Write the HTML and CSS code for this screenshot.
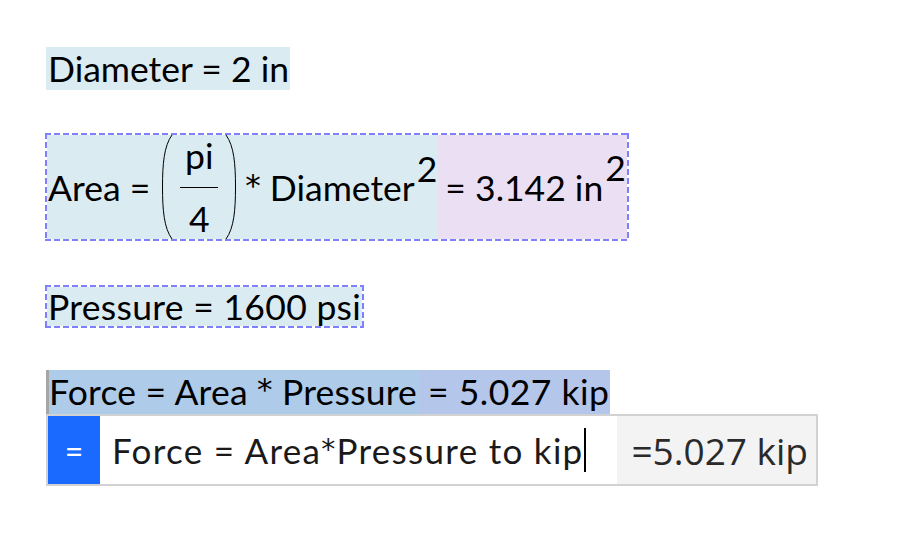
FILE: index.html
```html
<!DOCTYPE html>
<html>
<head>
<meta charset="utf-8">
<link rel="stylesheet" href="styles.css">
</head>
<body>
<div class="sheet">
  <div class="row row-diameter">
    <div class="expr">Diameter = 2 in</div>
  </div>

  <div class="row row-area">
    <div class="box dashed">
      <div class="expr expr-area">
        <span>Area =</span>
        <span class="paren-group">
          <svg class="paren" width="12" height="106" viewBox="0 0 12 106"><path d="M11 1 C3 12 1.5 30 1.5 53 C1.5 76 3 94 11 105" fill="none" stroke="#000" stroke-width="1"/></svg>
          <span class="frac">
            <span class="num">pi</span>
            <span class="bar"></span>
            <span class="den">4</span>
          </span>
          <svg class="paren" width="12" height="106" viewBox="0 0 12 106"><path d="M1 1 C9 12 10.5 30 10.5 53 C10.5 76 9 94 1 105" fill="none" stroke="#000" stroke-width="1"/></svg>
        </span>
        <span><span class="ast">*</span> Diameter<sup class="pow">2</sup></span>
      </div>
      <div class="result result-area">= 3.142 in<sup class="pow">2</sup></div>
    </div>
  </div>

  <div class="row row-pressure">
    <div class="box dashed">
      <div class="expr">Pressure = 1600 psi</div>
    </div>
  </div>

  <div class="row row-force">
    <div class="box selected">
      <div class="expr expr-force">Force = Area <span class="ast">*</span> Pressure</div>
      <div class="result result-force">= 5.027 kip</div>
    </div>
  </div>

  <div class="input-bar">
    <div class="eq-btn">=</div>
    <div class="input-text">Force = Area<span class="ast ast-input">*</span>Pressure to kip<span class="caret"></span></div>
    <div class="input-result">=5.027 kip</div>
  </div>
</div>
</body>
</html>
```

FILE: styles.css
```css
html, body {
  margin: 0;
  padding: 0;
  background: #ffffff;
}

body {
  font-family: "Lato", "Noto Sans", sans-serif;
  color: #000;
}

.sheet {
  padding: 47px 0 0 45px;
  display: flex;
  flex-direction: column;
  align-items: flex-start;
}

.row {
  display: flex;
}

.expr {
  background: #dbebf2;
  font-size: 35.5px;
  line-height: 43px;
  white-space: nowrap;
}

.ast {
  font-family: "DejaVu Sans", sans-serif;
  font-size: 31px;
  line-height: 0;
  vertical-align: 5px;
}

.row-diameter {
  margin-left: 1px;
}
.row-diameter .expr {
  padding: 0 1px 0 2px;
}

.box {
  display: flex;
  align-items: stretch;
}

.dashed {
  padding: 2px;
  background:
    repeating-linear-gradient(90deg, #8080ff 0 6px, transparent 6px 9px) left top / 100% 2px no-repeat,
    repeating-linear-gradient(90deg, #8080ff 0 6px, transparent 6px 9px) left bottom / 100% 2px no-repeat,
    repeating-linear-gradient(180deg, #8080ff 0 6px, transparent 6px 9px) left top / 2px 100% no-repeat,
    repeating-linear-gradient(180deg, #8080ff 0 6px, transparent 6px 9px) right top / 2px 100% no-repeat;
}

.row-area {
  margin-top: 43px;
}

.expr-area {
  display: flex;
  align-items: center;
  height: 104px;
  padding: 0 1px 0 1px;
}

.paren-group {
  display: inline-flex;
  align-items: center;
  margin: 0 8px 0 11px;
}

.paren {
  display: block;
}

.frac {
  display: inline-flex;
  flex-direction: column;
  align-items: center;
  margin: 0 6px;
  width: 40px;
}

.num, .den {
  line-height: 40px;
  font-size: 35.5px;
}

.bar {
  display: block;
  width: 38px;
  height: 1px;
  background: #000;
  margin: 11px 0;
}

.pow {
  font-size: 35.5px;
  vertical-align: 0;
  position: relative;
  top: -19px;
  line-height: 0;
  margin-left: 2px;
}

.result {
  font-size: 35.5px;
  white-space: nowrap;
}

.result-area {
  background: #ebe0f3;
  display: flex;
  align-items: center;
  padding: 0 1px 0 7px;
}

.row-pressure {
  margin-top: 44px;
}
.row-pressure .expr {
  line-height: 39px;
  padding: 0 1px 0 1px;
  letter-spacing: 0.3px;
}

.row-force {
  margin-top: 42px;
  margin-left: 1px;
}

.selected {
  border-left: 3px solid #a6a6a6;
}

.expr-force {
  background: #aecbea;
  line-height: 44px;
  padding: 0 3px 0 0;
  letter-spacing: 0.2px;
}

.result-force {
  background: #b4c6ea;
  line-height: 44px;
  padding: 0 0 0 8px;
  letter-spacing: 0.5px;
}

.input-bar {
  margin-left: 1px;
  width: 768px;
  height: 68px;
  border: 2px solid #d2d2d2;
  display: flex;
  align-items: stretch;
  background: #fff;
}

.eq-btn {
  width: 52px;
  background: #1a6aff;
  color: #ffffff;
  font-family: "Lato", sans-serif;
  font-size: 32px;
  display: flex;
  align-items: center;
  justify-content: center;
}

.input-text {
  flex: 1;
  display: flex;
  align-items: center;
  padding-left: 12px;
  font-size: 35px;
  letter-spacing: 1.3px;
  color: #1a1a1a;
  white-space: nowrap;
}

.ast-input {
  font-size: 28px;
  line-height: normal;
  align-self: center;
  margin-top: -2px;
  vertical-align: 0;
}

.caret {
  display: inline-block;
  width: 2px;
  height: 44px;
  background: #000;
  margin-left: 0;
}

.input-result {
  width: 199px;
  box-sizing: border-box;
  background: #f3f3f3;
  display: flex;
  align-items: center;
  justify-content: flex-end;
  padding-right: 8px;
  font-family: "Open Sans", sans-serif;
  font-size: 37px;
  color: #2a2a2a;
  white-space: nowrap;
}
```
